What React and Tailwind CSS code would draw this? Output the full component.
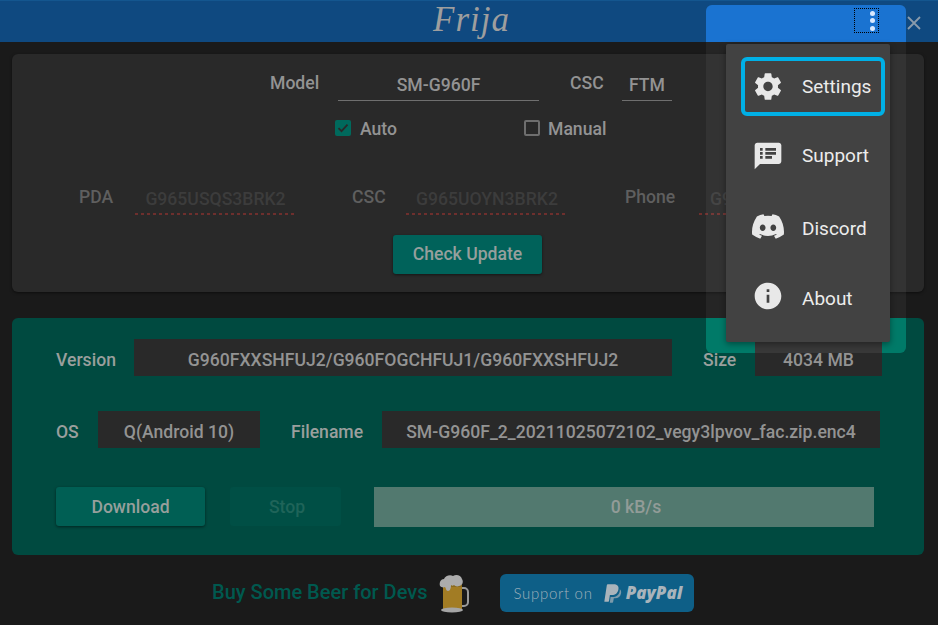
const ROBOTO = { fontFamily: "Roboto, 'Liberation Sans', sans-serif" };

function Label({ children, className = "" }) {
  return <span className={`pt-[4px] text-[17.6px] leading-[22px] font-medium whitespace-nowrap ${className}`}>{children}</span>;
}

function ReadBox({ children, className = "" }) {
  return (
    <div className={`h-[37px] pt-[5px] bg-[#292929] flex items-center justify-center text-[17.6px] font-medium text-[#939393] whitespace-nowrap overflow-hidden ${className}`}>
      {children}
    </div>
  );
}

function PaypalMark() {
  return (
    <svg width="21" height="24" viewBox="0 0 24 24" fill="#a9b4bb">
      <path d="M7.1 22H3.3a.6.6 0 0 1-.6-.7L5.5 3a1.2 1.2 0 0 1 1.2-1h6.6c3.7 0 6.2 1.900 5.500 5.700-.8 4.500-3.600 6.700-7.600 6.700H9l-1 6.700a1 1 0 0 1-.9.900z" />
      <path d="M20.300 7.600c1.400 1 1.900 2.700 1.500 4.800-.7 3.700-3.200 5.700-6.800 5.700h-1.500l-.8 4.300a.8.800 0 0 1-.8.600H8.900l.9-6.300h2.100c4.500 0 7.500-2.500 8.400-7.100z" opacity=".7" />
    </svg>
  );
}

function Beer() {
  return (
    <svg width="30" height="40" viewBox="0 0 30 40">
      <path d="M22 15h3a4 4 0 0 1 4 4v10a4 4 0 0 1-4 4h-3" fill="none" stroke="#9a9a9a" strokeWidth="2" />
      <rect x="4" y="10" width="19" height="26" rx="2" fill="#8a6a1e" />
      <rect x="4" y="14" width="19" height="22" fill="#a27c24" />
      <ellipse cx="13" cy="37" rx="11" ry="2.500" fill="#a5a5a5" />
      <path d="M1 13c-1-4 1-7 4-7 1-3 6-5 9-3 3-2 8-1 9 3 2 3 0 7-3 7-2 1-4 0-5-1-1 1-2 1-3 0 0 3-1 6-3 6s-2-3-3-4c-2 1-4 0-5-1z" fill="#acacac" />
    </svg>
  );
}

function MenuItem({ icon, label, className = "", textClass = "" }) {
  return (
    <div className={`flex items-center ${className}`}>
      <span className="w-[32px] h-[32px] flex items-center justify-center shrink-0">{icon}</span>
      <span className={`ml-[18px] text-[19px] font-normal text-[#ececec] leading-none ${textClass}`}>{label}</span>
    </div>
  );
}

const iconWhite = "#e8e8e8";
const redLine = "bg-[repeating-linear-gradient(90deg,#6e2f2d_0px,#6e2f2d_3px,transparent_3px,transparent_6px)] bg-[length:100%_2px] bg-bottom bg-no-repeat";

export default function App() {
  return (
    <div style={ROBOTO} className="relative w-[938px] h-[625px] overflow-hidden bg-[#1a1a1a]">
      <header className="h-[42px] bg-[#0f4980] border-t border-[#14568f] flex items-center justify-center relative">
        <span style={{ fontFamily: "'Liberation Serif', serif" }} className="italic text-[35px] text-[#9e9e9e] leading-none -mt-[4px] ml-[5px] tracking-[1px]">Frija</span>
        <svg className="absolute right-[16px] top-[14px]" width="16" height="16" viewBox="0 0 16 16" stroke="#8a9bab" strokeWidth="1.800"><path d="M2 2l12 12M14 2L2 14" /></svg>
      </header>

      <main className="pl-[12px] pr-[14px] pt-[12px] flex flex-col">
        <section className="h-[238px] rounded-[6px] bg-[#292929] shadow-[0_1px_3px_rgba(0,0,0,0.5)] flex flex-col">
          <div className="flex items-start pt-[18px] pl-[258px]">
            <Label className="!pt-0 w-[49px] text-[#939393]">Model</Label>
            <div className="ml-[19px] w-[201px] h-[29px] border-b border-[#6f6f6f] text-center text-[17.6px] font-medium text-[#939393] leading-[26px]">SM-G960F</div>
            <Label className="!pt-0 ml-[31px] w-[34px] text-[#939393]">CSC</Label>
            <div className="ml-[18px] w-[50px] h-[29px] border-b border-[#6f6f6f] text-center text-[17.6px] font-medium text-[#939393] leading-[26px]">FTM</div>
          </div>
          <div className="flex items-center mt-[15px] pl-[323px] h-[24px]">
            <span className="w-[16px] h-[16px] rounded-[2px] bg-[#00695c] flex items-center justify-center">
              <svg width="14" height="14" viewBox="0 0 14 14" fill="none" stroke="#292929" strokeWidth="1.800"><path d="M2.500 7.200l3 3 6-6.500" /></svg>
            </span>
            <Label className="!pt-[2px] ml-[9px] w-[36px] text-[#939393]">Auto</Label>
            <span className="ml-[128px] w-[16px] h-[16px] rounded-[2px] border-2 border-[#6e6e6e]" />
            <Label className="!pt-[2px] ml-[8px] text-[#939393]">Manual</Label>
          </div>
          <div className="flex items-start mt-[46px] pl-[67px] overflow-hidden">
            <Label className="!pt-0 w-[34px] text-[#5f5f5f]">PDA</Label>
            <div className={`ml-[22px] w-[161px] h-[29px] text-center text-[17.6px] font-medium text-[#3c3c3c] leading-[26px] ${redLine}`}>G965USQS3BRK2</div>
            <Label className="!pt-0 ml-[56px] w-[34px] text-[#5f5f5f]">CSC</Label>
            <div className={`ml-[20px] w-[162px] h-[29px] text-center text-[17.6px] font-medium text-[#3c3c3c] leading-[26px] ${redLine}`}>G965UOYN3BRK2</div>
            <Label className="!pt-0 ml-[57px] w-[50px] text-[#5f5f5f]">Phone</Label>
            <div className={`ml-[24px] w-[161px] h-[29px] text-[17.6px] font-medium text-[#3c3c3c] leading-[26px] pl-[11px] whitespace-nowrap overflow-hidden ${redLine}`}>G965USQU3BRK2</div>
          </div>
          <div className="flex mt-[20px] pl-[381px]">
            <button className="w-[149px] h-[39px] rounded-[3px] bg-[#00625a] text-[17.6px] font-medium text-[#969f9d] shadow-[0_1px_3px_rgba(0,0,0,0.5)]">Check Update</button>
          </div>
        </section>

        <section className="mt-[26px] h-[237px] rounded-[6px] bg-[#004a40] flex flex-col pl-[44px] pt-[21px]">
          <div className="flex items-center h-[37px]">
            <Label className="w-[78px] text-[#9a9f9d]">Version</Label>
            <ReadBox className="w-[538px]">G960FXXSHFUJ2/G960FOGCHFUJ1/G960FXXSHFUJ2</ReadBox>
            <Label className="ml-[31px] w-[33px] text-[#9a9f9d]">Size</Label>
            <ReadBox className="ml-[19px] w-[127px]">4034 MB</ReadBox>
          </div>
          <div className="flex items-center h-[37px] mt-[35px]">
            <Label className="w-[42px] text-[#9a9f9d]">OS</Label>
            <ReadBox className="w-[162px]">Q(Android 10)</ReadBox>
            <Label className="ml-[31px] w-[72px] text-[#9a9f9d]">Filename</Label>
            <ReadBox className="ml-[19px] w-[498px]">SM-G960F_2_20211025072102_vegy3lpvov_fac.zip.enc4</ReadBox>
          </div>
          <div className="flex items-start h-[40px] mt-[39px]">
            <button className="w-[149px] h-[39px] pt-[2px] rounded-[3px] bg-[#005f54] text-[17.6px] font-medium text-[#979f9c] shadow-[0_1px_3px_rgba(0,0,0,0.5)]">Download</button>
            <button className="ml-[25px] w-[111px] h-[39px] pt-[2px] pl-[3px] rounded-[3px] bg-[#004f45] text-[17.6px] font-medium text-[#1f6459]">Stop</button>
            <div className="ml-[33px] w-[500px] h-[40px] pl-[24px] bg-[#52796f] flex items-center justify-center text-[17.6px] font-medium text-[#929c98]">0 kB/s</div>
          </div>
        </section>

        <footer className="mt-[18px] flex items-center h-[40px] pl-[200px]">
          <span className="-mt-[2px] text-[20px] font-medium text-[#00594f] whitespace-nowrap">Buy Some Beer for Devs</span>
          <span className="ml-[12px] flex"><Beer /></span>
          <div className="ml-[31px] w-[194px] h-[38px] rounded-[6px] bg-[#0e5f87] flex items-center pl-[13px]">
            <span style={{ fontFamily: "Lato, sans-serif" }} className="text-[15px] tracking-[0.7px] text-[#9fb0bb] font-light">Support on</span>
            <span className="ml-[9px] flex"><PaypalMark /></span>
            <span style={{ fontFamily: "'Open Sans', sans-serif" }} className="ml-[3px] italic font-extrabold text-[17px] text-[#a9b4bb]">PayPal</span>
          </div>
        </footer>
      </main>

      <div className="absolute left-[706px] top-[5px] w-[200px] h-[348px] rounded-[6px] bg-[#ffffff0d] overflow-hidden">
        <div className="h-[37px] bg-[#1a73d1]" />
        <div className="absolute left-0 right-0 top-[313px] bottom-0 bg-[#007a68]" />
        <div className="absolute left-[49px] w-[127px] top-[334px] bottom-0 bg-[#383838]" />
      </div>
      <div className="absolute left-[854px] top-[8px] w-[25px] h-[25px] border border-dotted border-black flex flex-col items-end justify-center gap-[2.500px] pr-[3px]">
        <span className="w-[5px] h-[5px] rounded-full bg-[#d8e9ff]" />
        <span className="w-[5px] h-[5px] rounded-full bg-[#d8e9ff]" />
        <span className="w-[5px] h-[5px] rounded-full bg-[#d8e9ff]" />
      </div>

      <div className="absolute left-[726px] top-[44px] w-[164px] h-[298px] rounded-[2px] bg-[#424242] shadow-[0_2px_6px_rgba(0,0,0,0.4)] flex flex-col pt-[13px]">
        <MenuItem
          className="ml-[15px] mr-[5px] pl-[7px] h-[59px] rounded-[6px] border-[4px] border-[#00b0e6]"
          icon={
            <svg width="33" height="33" viewBox="0 0 24 24" fill={iconWhite}><path d="M19.430 12.980c.04-.32.07-.64.07-.98s-.03-.66-.07-.98l2.110-1.650c.19-.15.24-.42.12-.64l-2-3.460c-.12-.22-.39-.3-.61-.22l-2.490 1c-.52-.4-1.080-.73-1.690-.98l-.38-2.650C14.460 2.180 14.250 2 14 2h-4c-.25 0-.46.18-.49.42l-.38 2.650c-.61.25-1.170.59-1.690.98l-2.490-1c-.23-.09-.49 0-.61.22l-2 3.460c-.13.22-.07.49.12.64l2.110 1.650c-.04.32-.07.65-.07.98s.03.66.07.98l-2.110 1.650c-.19.15-.24.42-.12.64l2 3.460c.12.22.39.3.61.22l2.490-1c.52.4 1.080.73 1.690.98l.38 2.650c.03.24.24.42.49.42h4c.25 0 .46-.18.49-.42l.38-2.650c.61-.25 1.170-.59 1.690-.98l2.490 1c.23.09.49 0 .61-.22l2-3.460c.12-.22.07-.49-.12-.64l-2.110-1.650zM12 15.500c-1.930 0-3.500-1.570-3.500-3.500s1.570-3.500 3.500-3.500 3.500 1.570 3.500 3.500-1.570 3.500-3.500 3.500z" /></svg>
          }
          label="Settings"
        />
        <MenuItem
          className="mt-[10px] pl-[26px] h-[60px]"
          textClass="-mt-[2px]"
          icon={
            <svg width="32" height="32" viewBox="0 0 24 24" fill={iconWhite}><path d="M20 2H4c-1.100 0-1.990.9-1.990 2L2 22l4-4h14c1.100 0 2-.9 2-2V4c0-1.100-.9-2-2-2zM8 14H6v-2h2v2zm0-3H6V9h2v2zm0-3H6V6h2v2zm7 6h-5v-2h5v2zm3-3h-8V9h8v2zm0-3h-8V6h8v2z" /></svg>
          }
          label="Support"
        />
        <MenuItem
          className="mt-[10px] pl-[26px] h-[60px]"
          textClass="mt-[4px]"
          icon={
            <svg width="32" height="25" viewBox="0 0 127.140 96.360" fill={iconWhite}><path d="M107.700 8.070A105.150 105.150 0 0 0 81.470 0a72.060 72.060 0 0 0-3.360 6.830 97.680 97.680 0 0 0-29.110 0A72.370 72.370 0 0 0 45.640 0a105.890 105.890 0 0 0-26.250 8.090C2.790 32.650-1.710 56.600.54 80.210a105.730 105.730 0 0 0 32.170 16.150 77.700 77.700 0 0 0 6.890-11.110 68.420 68.420 0 0 1-10.850-5.180c.91-.66 1.800-1.340 2.660-2a75.570 75.570 0 0 0 64.320 0c.87.71 1.760 1.390 2.660 2a68.680 68.680 0 0 1-10.870 5.190 77 77 0 0 0 6.890 11.100 105.250 105.250 0 0 0 32.190-16.140c2.640-27.380-4.510-51.110-18.900-72.150zM42.450 65.690C36.180 65.690 31 60 31 53s5-12.740 11.430-12.740S54 46 53.890 53s-5.050 12.690-11.440 12.690zm42.240 0C78.410 65.690 73.250 60 73.250 53s5-12.740 11.440-12.740S96.230 46 96.120 53s-5.040 12.690-11.430 12.690z" /></svg>
          }
          label="Discord"
        />
        <MenuItem
          className="mt-[10px] pl-[26px] h-[60px]"
          textClass="mt-[4px]"
          icon={
            <svg width="32" height="32" viewBox="0 0 24 24" fill={iconWhite}><path d="M12 2C6.480 2 2 6.480 2 12s4.480 10 10 10 10-4.480 10-10S17.520 2 12 2zm1 15h-2v-6h2v6zm0-8h-2V7h2v2z" /></svg>
          }
          label="About"
        />
      </div>
    </div>
  );
}
